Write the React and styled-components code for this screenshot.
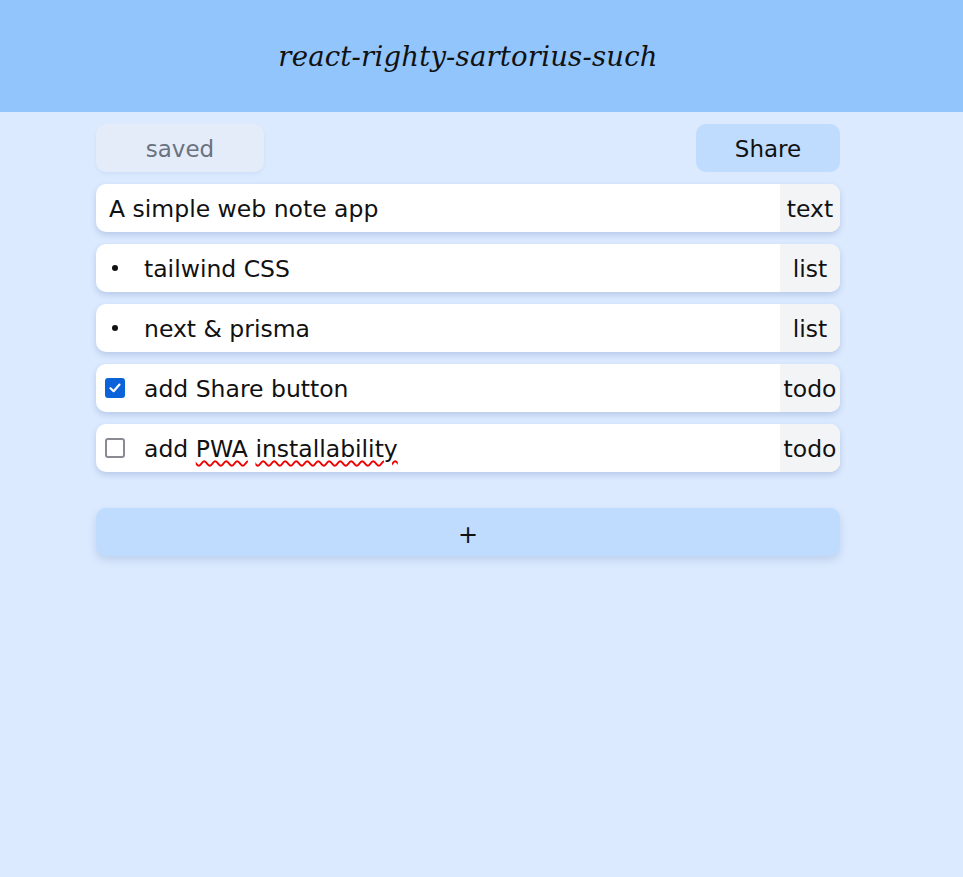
import React, { useState } from "react";
import styled, { createGlobalStyle } from "styled-components";

const GlobalStyle = createGlobalStyle`
  html, body {
    margin: 0;
    padding: 0;
    background: #dbeafe;
    font-family: "DejaVu Sans", "Noto Sans", sans-serif;
  }
  * { box-sizing: border-box; }
`;

const initialBlocks = [
  { id: 1, kind: "text", value: "A simple web note app" },
  { id: 2, kind: "list", value: "tailwind CSS" },
  { id: 3, kind: "list", value: "next & prisma" },
  { id: 4, kind: "todo", value: "add Share button", done: true },
  { id: 5, kind: "todo", value: "add PWA installability", done: false, typo: true },
];

const App = () => {
  const [blocks, setBlocks] = useState(initialBlocks);

  const toggle = (id) =>
    setBlocks((bs) => bs.map((b) => (b.id === id ? { ...b, done: !b.done } : b)));

  const addBlock = () =>
    setBlocks((bs) => [...bs, { id: Date.now(), kind: "text", value: "" }]);

  return (
    <Page>
      <GlobalStyle />
      <Header>
        <Title>react-righty-sartorius-such</Title>
      </Header>
      <Main>
        <Toolbar>
          <SavedButton>saved</SavedButton>
          <ShareButton>Share</ShareButton>
        </Toolbar>
        <BlockList>
          {blocks.map((b) => (
            <Block key={b.id}>
              {b.kind === "list" && <Bullet />}
              {b.kind === "todo" && (
                <Check checked={b.done} onClick={() => toggle(b.id)}>
                  {b.done && (
                    <svg width="14" height="14" viewBox="0 0 14 14">
                      <path
                        d="M2.5 7.3 L5.6 10.2 L11.5 3.6"
                        fill="none"
                        stroke="#fff"
                        strokeWidth="2.2"
                        strokeLinecap="round"
                        strokeLinejoin="round"
                      />
                    </svg>
                  )}
                </Check>
              )}
              <BlockText indent={b.kind !== "text"}>
                {b.typo ? (
                  <>
                    add <Typo>PWA</Typo> <Typo>installability</Typo>
                  </>
                ) : (
                  b.value
                )}
              </BlockText>
              <Kind>{b.kind}</Kind>
            </Block>
          ))}
        </BlockList>
        <AddButton onClick={addBlock}>+</AddButton>
      </Main>
    </Page>
  );
};

const Page = styled.div`
  min-height: 877px;
  background: #dbeafe;
`;

const Header = styled.header`
  height: 112px;
  background: #93c5fd;
  display: flex;
  align-items: center;
  justify-content: center;
  padding-right: 27px;
`;

const Title = styled.h1`
  margin: 0;
  font-family: "DejaVu Serif", "Liberation Serif", serif;
  font-style: italic;
  font-weight: 400;
  font-size: 27.5px;
  color: #111;
  letter-spacing: 0.2px;
`;

const Main = styled.main`
  width: 744px;
  margin-left: 96px;
  padding-top: 12px;
`;

const Toolbar = styled.div`
  display: flex;
  justify-content: space-between;
  margin-bottom: 12px;
`;

const ToolButton = styled.button`
  height: 48px;
  padding-top: 2px;
  border: none;
  border-radius: 10px;
  font-family: inherit;
  font-size: 23px;
  cursor: pointer;
`;

const SavedButton = styled(ToolButton)`
  width: 168px;
  background: #e4ecf9;
  color: #6b7280;
  box-shadow: 0 2px 4px rgba(30, 64, 175, 0.06);
`;

const ShareButton = styled(ToolButton)`
  width: 144px;
  background: #bfdbfe;
  color: #111;
`;

const BlockList = styled.div`
  display: flex;
  flex-direction: column;
  gap: 12px;
`;

const Block = styled.div`
  height: 48px;
  display: flex;
  align-items: center;
  background: #fff;
  border-radius: 10px;
  overflow: hidden;
  box-shadow: 0 3px 6px rgba(30, 58, 138, 0.18);
`;

const Bullet = styled.span`
  width: 6px;
  height: 6px;
  margin-left: 16px;
  margin-right: 14px;
  border-radius: 50%;
  background: #111;
`;

const Check = styled.span`
  width: 20px;
  height: 20px;
  margin-left: 9px;
  margin-right: 7px;
  border-radius: 3px;
  display: flex;
  align-items: center;
  justify-content: center;
  background: ${(p) => (p.checked ? "#0b63d9" : "#fff")};
  border: ${(p) => (p.checked ? "none" : "2px solid #8a8a95")};
  cursor: pointer;
`;

const BlockText = styled.div`
  flex: 1;
  padding-left: ${(p) => (p.indent ? "12px" : "13px")};
  padding-top: 2px;
  font-size: 23.5px;
  color: #111;
  white-space: nowrap;
`;

const Typo = styled.span`
  text-decoration: underline wavy #e00;
  text-decoration-thickness: 1.6px;
  text-underline-offset: 3px;
`;

const Kind = styled.div`
  width: 60px;
  height: 100%;
  padding-top: 2px;
  display: flex;
  align-items: center;
  justify-content: center;
  background: #f3f4f6;
  font-size: 23.5px;
  color: #111;
`;

const AddButton = styled.button`
  display: flex;
  align-items: center;
  justify-content: center;
  width: 100%;
  height: 48px;
  margin-top: 36px;
  padding: 6px 0 0;
  border: none;
  border-radius: 10px;
  background: #bfdbfe;
  font-family: inherit;
  font-size: 24px;
  color: #111;
  cursor: pointer;
  box-shadow: 0 4px 8px rgba(30, 58, 138, 0.15);
`;

export default App;
